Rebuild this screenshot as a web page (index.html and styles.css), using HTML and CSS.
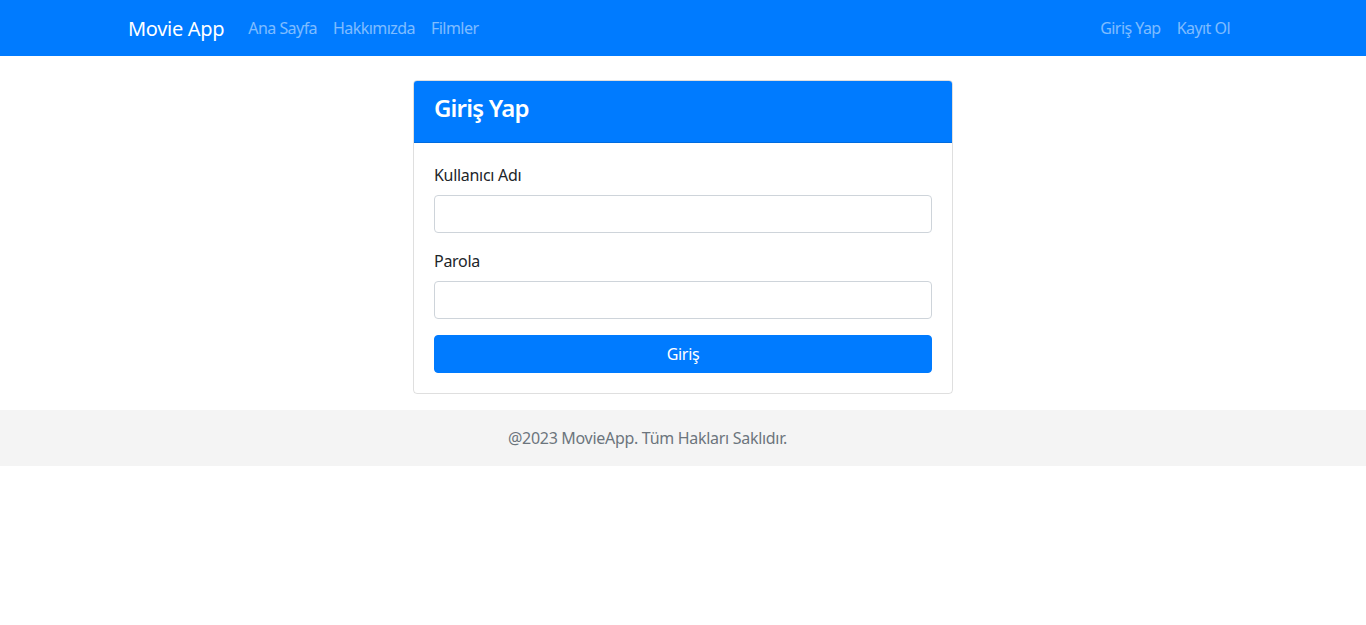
FILE: index.html
```html
<!DOCTYPE html>
<html lang="tr">
<head>
<meta charset="utf-8">
<title>Movie App</title>
<link rel="stylesheet" href="styles.css">
</head>
<body>
<nav class="navbar">
  <div class="container nav-inner">
    <a class="brand" href="#">Movie App</a>
    <ul class="nav-links">
      <li><a href="#">Ana Sayfa</a></li>
      <li><a href="#">Hakkımızda</a></li>
      <li><a href="#">Filmler</a></li>
    </ul>
    <ul class="nav-links nav-right">
      <li><a href="#">Giriş Yap</a></li>
      <li><a href="#">Kayıt Ol</a></li>
    </ul>
  </div>
</nav>
<main class="container main">
  <div class="card">
    <div class="card-header"><h4>Giriş Yap</h4></div>
    <div class="card-body">
      <div class="form-group">
        <label>Kullanıcı Adı</label>
        <input class="form-control" type="text">
      </div>
      <div class="form-group">
        <label>Parola</label>
        <input class="form-control" type="password">
      </div>
      <button class="btn">Giriş</button>
    </div>
  </div>
</main>
<footer class="footer">
  <div class="container">
    <p class="footer-text">@2023 MovieApp. Tüm Hakları Saklıdır.</p>
  </div>
</footer>
</body>
</html>
```
FILE: styles.css
```css
* { box-sizing: border-box; }
html, body { margin: 0; padding: 0; }
body {
  font-family: "Noto Sans", "Open Sans", sans-serif;
  font-size: 16px;
  line-height: 1.5;
  color: #212529;
  background: #fff;
}
.container {
  width: 1140px;
  margin: 0 auto;
  padding: 0 15px;
}
.navbar {
  background: #007bff;
  height: 56px;
}
.nav-inner {
  display: flex;
  align-items: center;
  height: 56px;
}
.brand {
  color: #fff;
  font-size: 20px;
  line-height: 30px;
  text-decoration: none;
  margin-right: 16px;
  letter-spacing: -0.3px;
  padding-top: 2px;
}
.nav-links {
  display: flex;
  list-style: none;
  margin: 0;
  padding: 0;
}
.nav-links a {
  display: block;
  padding: 8px;
  color: rgba(255, 255, 255, 0.5);
  text-decoration: none;
  letter-spacing: -0.55px;
}
.nav-right { margin-left: auto; }
.main {
  padding-top: 24px;
  padding-bottom: 16px;
}
.card {
  width: 540px;
  margin-left: 285px;
  border: 1px solid rgba(0, 0, 0, 0.125);
  border-radius: 4px;
  overflow: hidden;
}
.card-header {
  background: #007bff;
  color: #fff;
  padding: 13px 20px 11px;
  border-bottom: 1px solid rgba(0, 0, 0, 0.125);
}
.card-header h4 {
  margin: 0 0 8px;
  font-size: 24px;
  line-height: 28.8px;
  font-weight: 600;
  letter-spacing: -0.8px;
}
.card-body { padding: 20px; }
.form-group { margin-bottom: 16px; }
.form-group label {
  display: block;
  margin-bottom: 8px;
  letter-spacing: -0.3px;
}
.form-control {
  display: block;
  width: 100%;
  height: 38px;
  padding: 6px 12px;
  border: 1px solid #ced4da;
  border-radius: 4px;
  font: inherit;
}
.btn {
  display: block;
  width: 100%;
  height: 38px;
  background: #007bff;
  color: #fff;
  border: 1px solid #007bff;
  border-radius: 4px;
  font: inherit;
  letter-spacing: -0.3px;
}
.footer {
  background: #f4f4f4;
  padding: 16px 0;
}
.footer-text {
  margin: 0 0 0 380px;
  color: #6c757d;
  letter-spacing: -0.3px;
}
```
